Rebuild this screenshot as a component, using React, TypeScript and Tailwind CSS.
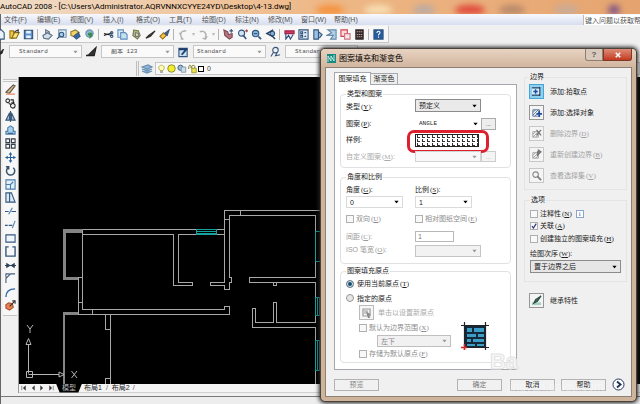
import type { ReactNode } from 'react'

type IconProps = { children: ReactNode; className?: string }

function Icon({ children, className = 'w-3 h-3' }: IconProps) {
  return (
    <svg viewBox="0 0 12 12" fill="none" stroke="#34557d" strokeWidth="1.2" className={`shrink-0 ${className}`}>
      {children}
    </svg>
  )
}

function ToolButton({ label, children }: { label: string; children: ReactNode }) {
  return (
    <button aria-label={label} className="flex w-[14px] h-[14px] shrink-0 items-center justify-center">
      <Icon className="w-[11px] h-[11px]">{children}</Icon>
    </button>
  )
}

function Separator() {
  return <span className="mx-[2px] h-[11px] w-px shrink-0 bg-[#b4b4b4]" />
}

function Key({ k }: { k: string }) {
  return (
    <span className="ml-px font-['Liberation_Serif','Noto_Sans_CJK_SC',serif]">
      (<u>{k}</u>)
    </span>
  )
}

type ComboProps = { label: string; value: string; className: string; disabled?: boolean; mono?: boolean; faint?: boolean }

function Combo({ label, value, className, disabled, mono, faint }: ComboProps) {
  return (
    <div className={`relative shrink-0 ${className}`}>
      <select
        aria-label={label}
        disabled={disabled}
        defaultValue={value}
        className={`block w-full h-full appearance-none bg-transparent pl-[3px] leading-none opacity-100 ${
          mono ? "font-['Liberation_Mono','Noto_Sans_CJK_SC',monospace] text-[6px]" : ''
        } ${disabled ? 'text-[#858585]' : ''}`}
      >
        <option>{value}</option>
      </select>
      <svg viewBox="0 0 6 4" className="pointer-events-none absolute right-[3px] top-1/2 w-[5px] h-[3px] -translate-y-1/2">
        <path d="M0 0h6L3 4z" fill={disabled || faint ? '#999' : '#000'} />
      </svg>
    </div>
  )
}

function Check({ label, k, checked, disabled }: { label: string; k: string; checked?: boolean; disabled?: boolean }) {
  return (
    <label className={`flex items-center gap-[2px] whitespace-nowrap ${disabled ? 'text-[#8c8c8c]' : ''}`}>
      <span className="relative flex w-2 h-2 shrink-0">
        <input
          type="checkbox"
          defaultChecked={checked}
          disabled={disabled}
          className="peer w-2 h-2 appearance-none border border-[#b0b0b0] bg-[#f8f8f8]"
        />
        <svg viewBox="0 0 8 8" className="pointer-events-none absolute inset-0 hidden peer-checked:block" fill="none" stroke="#3b3f86" strokeWidth="1.3">
          <path d="M2 4l1.4 2L6.2 1.6" />
        </svg>
      </span>
      <span>
        {label}
        <Key k={k} />
      </span>
    </label>
  )
}

function Group({ title, className, children }: { title: string; className: string; children: ReactNode }) {
  return (
    <fieldset className={`min-w-0 border border-[#dfe1e4] rounded-sm pl-[5px] ${className}`}>
      <legend className="px-px leading-[10px]">{title}</legend>
      {children}
    </fieldset>
  )
}

const menus = ['文件(F)', '编辑(E)', '视图(V)', '插入(I)', '格式(O)', '工具(T)', '绘图(D)', '标注(N)', '修改(M)', '窗口(W)', '帮助(H)']

function StandardToolbar() {
  return (
    <div className="flex h-[19px] items-center">
      <div className="flex h-[17px] items-center border-r border-b border-[#c8c8c8] bg-[#f7f7f7] pr-[3px]">
        <div className="-ml-[8px] flex">
          <ToolButton label="新建"><path d="M3 1h4l3 3v7H3z" fill="#e8f3fb" /></ToolButton>
          <ToolButton label="打开"><path d="M1 2h4v8H1z" fill="#f2c648" stroke="#a17818" /><path d="M3 10l3-6h5l-3 6z" fill="#ffe37c" stroke="#83701d" /><path d="M6 3l4-2v3" stroke="#333" /></ToolButton>
          <ToolButton label="保存"><path d="M1.5 1.5h9v9h-9z" fill="#5c92cc" /><path d="M3.5 2h5v3h-5zM3.5 7h5v3h-5z" fill="#e6f1fa" stroke="none" /></ToolButton>
        </div>
        <Separator />
        <div className="flex">
          <ToolButton label="打印"><path d="M1 7l5-3 5 3-4 4-5-1zM4 5V1l4 2v2" fill="#d5dfe8" stroke="#5b6f84" /></ToolButton>
          <ToolButton label="打印预览"><path d="M3 1h8v8H3z" fill="#e8f0f6" stroke="#6d92b5" /><circle cx="6" cy="6" r="2.5" fill="#a7cce9" /><path d="M4 8l-3 3" /></ToolButton>
          <ToolButton label="发布"><path d="M1 3l5-2 4 3-4 5-5-2z" fill="#f3d35b" stroke="#8a7a35" /><path d="M4 8l5-4 2 4-4 3z" fill="#3969a8" /></ToolButton>
          <ToolButton label="三维"><circle cx="6" cy="5" r="4" fill="#8fb6cf" stroke="#6d93ac" /><path d="M5 4h4v4l-3 3V8l-2-2z" fill="#3c8a4d" stroke="none" /></ToolButton>
        </div>
        <Separator />
        <div className="flex">
          <ToolButton label="剪切"><path d="M1 5l9 2M1 7l9-3" stroke="#222" /><circle cx="9.500" cy="4" r="1.300" /><circle cx="9.500" cy="8" r="1.300" /></ToolButton>
          <ToolButton label="复制"><path d="M1 1h6v8H1z" fill="#dcecf7" stroke="#5f8fbd" /><path d="M4 4h5l2 2v5H4z" fill="#c3dff3" stroke="#5f8fbd" /></ToolButton>
          <ToolButton label="粘贴"><path d="M3 1l5 1 2 5-3 4-5-4z" fill="#b1b47a" stroke="#777c4c" /><path d="M5 4l3 1v3H5z" fill="#eee" stroke="#777" /></ToolButton>
          <ToolButton label="特性匹配"><path d="M1 10l3-3 7-5-5 6z" fill="#3b3326" stroke="#32302c" /></ToolButton>
          <ToolButton label="块编辑器"><path d="M1 8l4-4 3 3-4 4z" fill="#f5c443" stroke="#977115" /><path d="M6 5l5-4-2 6z" fill="#54617d" /></ToolButton>
        </div>
        <Separator />
        <div className="flex">
          <ToolButton label="放弃"><path d="M9 2C3 2 1 6 5 11M1 5l3 0M3 11l3 0" stroke="#b3b3b3" strokeWidth="1.600" /></ToolButton>
          <span className="w-[6px] self-center text-center text-[6px] leading-none text-[#bbb]">▾</span>
          <ToolButton label="重做"><path d="M2 3c5-2 8 2 6 7M5 10l3 1 2-3" stroke="#b3b3b3" strokeWidth="1.600" /></ToolButton>
          <span className="w-[6px] self-center text-center text-[6px] leading-none text-[#bbb]">▾</span>
        </div>
        <Separator />
        <div className="flex">
          <ToolButton label="平移"><path d="M1 1l4 2 1 3 4-1v4l-3 2-5-4z" fill="#b9757b" stroke="#7b4858" /><path d="M7 2h4M9 0v4" stroke="#3a4f7e" /></ToolButton>
          <ToolButton label="实时缩放"><circle cx="5" cy="4.500" r="3.300" fill="#cfe4f3" /><path d="M7 7l3 4" strokeWidth="1.700" /><path d="M9 2h3M10.500 .5v3" stroke="#a64643" /></ToolButton>
          <ToolButton label="窗口缩放"><circle cx="5" cy="5" r="3.500" fill="#89b5de" /><path d="M8 8l3 3" strokeWidth="1.700" /><path d="M3 5h4" /></ToolButton>
          <ToolButton label="缩放上一个"><circle cx="8" cy="5" r="2.500" fill="#88afd7" /><path d="M8 8l3 3M9 1L2 5l6 3" stroke="#263b62" strokeWidth="1.500" /></ToolButton>
        </div>
        <Separator />
        <div className="flex">
          <ToolButton label="特性"><path d="M1 2h10v3H1z" fill="#cc3867" stroke="#a52548" /><path d="M2 5v6l3-4 2 4 3-5" stroke="#284b79" /></ToolButton>
          <ToolButton label="设计中心"><path d="M1 1h10v10H1z" fill="#e1ebf4" /><path d="M3 3h2v2H3zM3 7h2v2H3zM7 4h2M7 8h2" /></ToolButton>
          <ToolButton label="工具选项板"><path d="M2 1h5v10H2zM7 3l4 3-3 4" fill="#9dc3e4" /></ToolButton>
          <ToolButton label="图纸集"><path d="M2 1h9v10H5l3-4H1l5-3z" fill="#b4d0e6" stroke="#6588a8" /></ToolButton>
          <ToolButton label="标记集"><path d="M1 1h7v7H1z" fill="#ffd9d9" stroke="#cf4050" /><path d="M5 5h6v6H5z" fill="#f5e4e6" stroke="#cf7680" /></ToolButton>
          <ToolButton label="计算器"><path d="M2 1h8v10H2z" fill="#302b2b" stroke="#302b2b" /><path d="M3 3h6M3 6h6M3 8.500h6" stroke="#cb9c90" strokeDasharray="1.500 .7" /></ToolButton>
        </div>
        <Separator />
        <ToolButton label="帮助">
          <path d="M1 1h10v10H1z" fill="#235e9f" />
          <path d="M4.300 4.300c0-2.600 4-2.200 3.200 0C7.200 5.200 6 5.400 6 7M6 8.300v1.200" stroke="#fff" />
        </ToolButton>
      </div>
    </div>
  )
}

const styleBox = 'w-[73px] h-[13px] border border-[#c6c6c6] bg-[#fafafa] text-[#555] pl-[6px]'

function StyleToolbar() {
  return (
    <div className="flex h-4 items-center gap-1 pb-px">
      <Icon className="-ml-[5px] w-[9px] h-3"><path d="M2 10l8-8-2 6z" fill="#222" stroke="#222" /></Icon>
      <Combo label="文字样式" value="Standard" mono faint className={styleBox} />
      <Icon className="w-[11px] h-3"><path d="M0 10h9l2-9-8 8z" fill="#333" stroke="#222" /></Icon>
      <Combo label="标注样式" value="副本 123" mono faint className={styleBox} />
      <Icon className="w-[11px] h-3"><path d="M1 2h9v9H1z" fill="#cadff2" /><path d="M1 3h9M4 9l6-7" stroke="#1d3e6c" strokeWidth="2" /></Icon>
      <Combo label="表格样式" value="Standard" mono faint className="w-[73px] h-[13px] border border-[#c6c6c6] bg-[#fafafa] text-[#555]" />
      <Icon className="w-[11px] h-3"><circle cx="6" cy="4" r="3" /><path d="M4 6L1 11M8 6l-2 4 5-1" /></Icon>
      <Combo label="多重引线样式" value="Standard" mono faint className={styleBox} />
    </div>
  )
}

function LayerToolbar() {
  return (
    <div className="flex h-[17px] items-center pl-[135px]">
      <span className="h-[15px] w-[3px] border-x border-[#bdbdbd]" />
      <Icon className="mx-[2px] w-3 h-3"><path d="M1 4l6-2 4 2-5 2zM1 6l5 2 5-2M1 8l5 2 5-2" fill="#91b7d6" stroke="#6b90b3" /></Icon>
      <div className="flex h-[13px] flex-1 items-center gap-px border border-[#c6c6c6] bg-[#f8f8f8] pl-px text-[7px] text-[#444]">
        <Icon className="w-[9px] h-3"><path d="M4 8C0 3 4 1 6 1s6 2 2 7z" fill="#fffbb2" stroke="#b3a84b" /><path d="M4 10h4" stroke="#555" /></Icon>
        <Icon className="w-[9px] h-[9px]"><circle cx="6" cy="6" r="5" fill="#f1ed2e" stroke="#85822a" /></Icon>
        <Icon className="w-[10px] h-[9px]"><circle cx="4" cy="5" r="3.500" fill="#a1bfd4" /><path d="M5 4h6v7H5z" fill="#cbdbe7" stroke="#8297a6" /></Icon>
        <Icon className="w-[9px] h-[10px]"><path d="M1 6V3c0-3 4-2 3 0v2M5 5V3c0-3 5-2 4 0v2" stroke="#77721c" /><path d="M5 5h6v6H5z" fill="#ebe447" stroke="#98922c" /></Icon>
        <span className="w-[6px] h-[6px] border border-black bg-white" />
        <span className="pl-[2px]">0</span>
      </div>
    </div>
  )
}

const modifyTools: { label: string; art: ReactNode }[] = [
  { label: '删除', art: <><path d="M1 9l8-8 2 1-6 8z" fill="#d6bb8d" stroke="#615646" /><path d="M1 11h10" stroke="#e2764b" /></> },
  { label: '复制', art: <><circle cx="3" cy="3" r="2" stroke="#333" /><circle cx="8.500" cy="8.500" r="2.500" stroke="#333" /><path d="M6 2h3v3M7 5l2 1 1-2M4 6l3 1" stroke="#222" /></> },
  { label: '镜像', art: <path d="M5 2L1 10h4zM7 2l4 8H7zM6 0v12" fill="#9ebcd7" stroke="#3c5878" /> },
  { label: '偏移', art: <><path d="M1 10h10V7H9V3L6 1 3 3v4H1z" fill="#abd0eb" stroke="#4c80ad" /><path d="M3 9h6" /></> },
  { label: '阵列', art: <path d="M1 1h4v4H1zM7 1h4v4H7zM1 7h4v4H1zM7 7h4v4H7z" stroke="#333d47" /> },
  { label: '移动', art: <><path d="M6 1v10M1 6h10" stroke="#2c639f" /><path d="M6 0l2 3H4zM6 12l2-3H4zM0 6l3-2v4zM12 6L9 4v4z" fill="#2c639f" stroke="none" /></> },
  { label: '旋转', art: <path d="M4 2.500a4.500 4.500 0 1 0 5 .5M1 2h3v3" stroke="#35526f" strokeWidth="1.600" /> },
  { label: '缩放', art: <path d="M1 1h10v10H1zM1 6h5v5M6 6l3-3" fill="#e2f0fa" stroke="#4c7ea9" /> },
  { label: '拉伸', art: <path d="M1 1h4v10H1zM5 1h2l4 10H5" fill="#dce9f4" /> },
  { label: '修剪', art: <><path d="M0 6h4M7 6h5" stroke="#355a81" /><path d="M4 9l4-7" stroke="#4c80ad" /></> },
  { label: '延伸', art: <><path d="M0 7h3M4 7h4" stroke="#355a81" /><path d="M8 10l3-8" stroke="#4c80ad" /></> },
  { label: '打断于点', art: <path d="M1 2h10v8H1z" fill="#eef6fc" /> },
  { label: '打断', art: <path d="M4 1H1v10h10V1H8" strokeWidth="1.500" /> },
  { label: '合并', art: <path d="M0 6h12M2 4l3 2-3 2zM10 4L7 6l3 2z" fill="#234d78" stroke="#2d4056" /> },
  { label: '倒角', art: <path d="M1 11V6l5-5h5M1 5V1h4" stroke="#45627e" /> },
  { label: '圆角', art: <path d="M1 11C1 5 5 2 11 2" stroke="#2f69a8" strokeWidth="1.500" /> },
  { label: '分解', art: <><path d="M1 5l3-2 4 1 1 4-4 3-4-2z" fill="#ec8053" stroke="#a3512d" /><path d="M5 7l6-6M8 1h3v3" stroke="#333" /></> },
]

function ModifyToolbar() {
  return (
    <div className="mt-[2px] ml-[2px] flex w-[14px] h-[237px] shrink-0 flex-col items-center justify-between border-b border-[#c5c5c5] bg-[#f7f7f7] pb-1">
      <span className="h-[3px] w-full border-y border-[#c5c5c5]" />
      {modifyTools.map(({ label, art }) => (
        <button key={label} aria-label={label} className="flex">
          <Icon className="w-[11px] h-[11px]">{art}</Icon>
        </button>
      ))}
    </div>
  )
}

function FloorPlan() {
  return (
    <svg className="w-full h-full" fill="none" strokeWidth="1" shapeRendering="crispEdges" aria-label="平面图">
      <g transform="translate(-18 -77)">
        {/* bay windows */}
        <g fill="#858585">
          <path d="M62 229h20v4H65v44h12v3H62z" />
          <path d="M62 312h15v3H64v69h-2z" />
        </g>
        {/* walls */}
        <g stroke="#a8a8a8">
          <path d="M81.500 229.500H223.500V210.500H319.500" />
          <path d="M81.500 229.500V309.500H223.500V306.500H228.500V314.500H77.500V277.500H81.500" />
          <path d="M81.500 234.500H172.500V285.500H191.500V282.500H177.500V234.500H223.500V282.500H209.500V285.500H223.500V289.500H228.500V282.500H230.500V277.500H228.500V215.500H314.500V277.500H248.500V282.500H314.500V322.500H275.500V302.500H272.500V322.500H254.500V308.500H251.500V327.500H314.500V384" />
          <path d="M239.500 210v5M223 219.500h5M272.500 282.500v3h3v-3M77 302.500h4M91.500 310v4" />
          <path d="M104.500 314.500V329.500H109.500M109.500 314V384M104.500 384V378.500H109.500M223.500 229v6" />
        </g>
        {/* window openings */}
        <g stroke="#16a3a0">
          <path d="M195.500 229.500h20v5h-20zM195 231.500h20M195 233.500h20" />
          <path d="M322 231.500H314.500V261.500H322" />
          <path d="M314.500 297.500h5v18h-5zM316.500 297v18M318.500 297v18" />
          <path d="M314.500 340.500h5v30h-5zM316.500 340v30M318.500 340v30" />
        </g>
        {/* coordinate axes */}
        <g stroke="#b5b5b5" shapeRendering="auto">
          <path d="M25.500 371.500h6v6h-6zM27.500 373.500V345M25 344.500l2.500-6 2.500 6zM27.500 374.500H58M58 372l5 2.500-5 2.500z" />
          <path d="M26 325l3 4 3-4M29 329v4M70.500 371l5.500 7M76 371l-5.500 7" />
        </g>
      </g>
    </svg>
  )
}

function LayoutTabs() {
  return (
    <div className="flex h-[9px] items-center border-b border-[#d0d0d0] bg-[#f4f4f4] text-[7px] leading-[8px]">
      <div className="flex w-[37px] justify-around">
        {['M1 1v6M6 1L3 4l3 3z', 'M6 1L3 4l3 3z', 'M2 1l3 3-3 3z', 'M2 1l3 3-3 3zM7 1v6'].map((d) => (
          <button key={d} aria-label="滚动布局">
            <svg viewBox="0 0 8 8" className="w-[6px] h-[6px]" fill="#333" stroke="#555" strokeWidth=".8"><path d={d} /></svg>
          </button>
        ))}
      </div>
      <button className="h-[9px] w-[26px] bg-black text-[#bbb] [clip-path:polygon(0_0,100%_0,86%_100%,14%_100%)]">模型</button>
      <button className="ml-[2px] whitespace-nowrap">布局1</button>
      <span className="mx-1 text-[#555]">/</span>
      <button className="whitespace-nowrap">布局2</button>
      <span className="mx-[3px] text-[#555]">/</span>
    </div>
  )
}

function BoundaryButton({ label, k, art, disabled, active }: { label: string; k?: string; art: ReactNode; disabled?: boolean; active?: boolean }) {
  return (
    <label className={`flex h-[15px] items-center gap-[6px] whitespace-nowrap ${disabled ? 'text-[#a3a3a3]' : ''}`}>
      <button
        disabled={disabled}
        aria-label={label}
        className={`flex w-[15px] h-[15px] items-center justify-center border ${
          active ? 'border-[#43a6d5] bg-[#8fd0f0]' : disabled ? 'border-[#c8c8c8] bg-[#f4f4f4]' : 'border-[#969696] bg-[#f4f4f4]'
        }`}
      >
        <Icon className="w-[11px] h-[11px]">{art}</Icon>
      </button>
      <span>
        {label}
        {k && <Key k={k} />}
      </span>
    </label>
  )
}

function HatchSettings() {
  return (
    <div className="w-[183px] shrink-0">
      <div className="flex h-3 items-end">
        <button className="z-10 -mb-px h-[13px] w-[37px] border border-b-0 border-[#a5a8ae] bg-white leading-[12px]">图案填充</button>
        <button className="h-[11px] w-[27px] border border-l-0 border-b-0 border-[#a5a8ae] bg-[#eee] leading-[10px]">渐变色</button>
      </div>
      <div className="h-[286px] border border-[#a5a8ae] bg-white pt-1 px-[5px]">
        <Group title="类型和图案" className="h-[79px]">
          <div className="grid grid-cols-[69px_1fr] items-center">
            <span className="h-[17px] leading-[15px]">类型<Key k="Y" />:</span>
            <Combo label="类型" value="预定义" className="mb-1 h-[13px] w-[66px] border border-[#8b8b8b] bg-[#eaeaea]" />
            <span className="h-4 leading-4">图案<Key k="P" />:</span>
            <div className="flex items-center">
              <Combo label="图案" value="ANGLE" mono className="h-3 w-[66px] pl-px" />
              <button className="h-3 w-[15px] border border-[#aaa] bg-[#eee] text-[6px] leading-[6px]">...</button>
            </div>
            <span className="h-4 leading-4">样例:</span>
            <div className="relative flex">
              <button aria-label="样例" className="h-[13px] w-[64px] border border-[#222] bg-white">
                <svg className="block w-full h-full" shapeRendering="crispEdges">
                  <defs>
                    <pattern id="angle" width="5" height="4" patternUnits="userSpaceOnUse">
                      <path d="M1.500 0v2.500H4" fill="none" stroke="#333" />
                    </pattern>
                  </defs>
                  <rect width="100%" height="100%" fill="url(#angle)" />
                </svg>
              </button>
              <span className="pointer-events-none absolute -left-2 -top-[4px] h-[23px] w-[82px] rounded-[7px] border-[3px] border-[#dc202d]" />
            </div>
            <span className="h-[17px] leading-[17px] text-[#aaa]">自定义图案<Key k="M" />:</span>
            <div className="flex items-center">
              <Combo label="自定义图案" value="" disabled className="h-[11px] w-[66px] border border-[#d4d4d4] bg-[#f8f8f8]" />
              <button disabled className="h-[11px] w-[15px] border border-[#ccc] bg-[#f4f4f4] text-[6px] leading-[6px] text-[#aaa]">...</button>
            </div>
          </div>
        </Group>
        <Group title="角度和比例" className="mt-1 h-[92px]">
          <div className="grid grid-cols-[69px_1fr] items-center">
            <span className="h-[14px] leading-[15px]">角度<Key k="G" />:</span>
            <span className="h-[14px] leading-[15px]">比例<Key k="S" />:</span>
            <Combo label="角度" value="0" className="h-3 w-[57px] border border-[#dadada]" />
            <Combo label="比例" value="1" className="h-3 w-[57px] border border-[#dadada]" />
            <div className="py-[6px]"><Check label="双向" k="U" disabled /></div>
            <div className="py-[6px]"><Check label="相对图纸空间" k="E" disabled /></div>
            <label htmlFor="spacing" className="text-[#9a9a9a]">间距<Key k="C" />:</label>
            <input id="spacing" disabled defaultValue="1" className="my-px h-[11px] w-[39px] border border-[#b8b8b8] pl-[2px] text-[#777]" />
            <span className="text-[#9a9a9a]">ISO 笔宽<Key k="O" />:</span>
            <Combo label="ISO 笔宽" value="" disabled className="mt-[2px] h-3 w-[66px] border border-[#c4c4c4] bg-[#f2f2f2]" />
          </div>
        </Group>
        <Group title="图案填充原点" className="mt-[2px] h-[97px]">
          <label className="flex h-4 items-center gap-[3px]">
            <input type="radio" name="origin" defaultChecked className="w-2 h-2 appearance-none rounded-full border border-[#7c8994] bg-[#dfe9ef] checked:bg-[#174c72] checked:shadow-[inset_0_0_0_1px_#d9e9f2]" />
            <span>使用当前原点<Key k="T" /></span>
          </label>
          <label className="flex h-3 items-center gap-[3px]">
            <input type="radio" name="origin" className="w-2 h-2 appearance-none rounded-full border border-[#999] bg-[#e6e6e6]" />
            <span>指定的原点</span>
          </label>
          <div className="flex pl-[13px]">
            <div className="w-[102px]">
              <div className="flex h-[17px] items-center gap-1 text-[#aaa]">
                <button disabled aria-label="单击以设置新原点" className="flex w-[15px] h-[15px] items-center justify-center border border-[#bbb] bg-[#f6f6f6]">
                  <Icon><path d="M2 2h7v7H2zM3 4h4M3 6h3" stroke="#999" /><path d="M5 4l5 4-2 0 1 3-2 0-1-3z" fill="#888" stroke="none" /></Icon>
                </button>
                单击以设置新原点
              </div>
              <div className="flex h-[13px] items-center"><Check label="默认为边界范围" k="X" disabled /></div>
              <Combo label="原点位置" value="左下" disabled className="my-px ml-[18px] h-3 w-[74px] border border-[#bfbfbf] bg-[#f1f1f1]" />
              <div className="flex h-3 items-center"><Check label="存储为默认原点" k="F" disabled /></div>
            </div>
            <svg viewBox="0 0 28 30" className="mt-[18px] w-7 h-[30px]">
              <path d="M4 4h21v21H4z" fill="#14293a" />
              <path d="M6 6h5v4H6zM13 6h10v4H13zM6 12h9v3H6zM17 12h6v3h-6zM6 17h4v3H6zM12 17h11v3H12zM6 22h8v2H6zM16 22h7v2h-7z" fill="#3c9dc6" />
              <path d="M0 3.500h28M3.500 0v28M24.500 0v28M0 25.500h28" stroke="#222" strokeWidth="1.200" />
              <path d="M0 25.500h6M3.500 22v6" stroke="#df2525" strokeWidth="1.500" />
            </svg>
          </div>
        </Group>
      </div>
    </div>
  )
}

const hatch = <path d="M2 10V3h7v7zM2 6l3-3M2 9l6-6M4 10l5-5" strokeWidth=".8" />
const hatchOff = <path d="M2 10V4h6v6zM2 7l3-3M2 10l6-6M5 10l3-3" stroke="#999" strokeWidth=".9" />

function BoundaryPanel() {
  return (
    <div className="min-w-0 flex-1 pl-[7px] pr-1">
      <fieldset className="h-[118px] min-w-0 border border-[#e4e4e4] pl-1 pt-[2px]">
        <legend className="px-px leading-[10px]">边界</legend>
        <div className="flex flex-col gap-[6px]">
          <BoundaryButton active label="添加:拾取点" art={<><path d="M1 2h8M1 10h8M9.500 1v10" stroke="#27405c" strokeWidth="1.500" /><path d="M1 3h8v6H1z" fill="#d8edfa" stroke="none" /><path d="M5 3.500v5M2.500 6h5" stroke="#1c4ea0" strokeWidth="1.600" /></>} />
          <BoundaryButton label="添加:选择对象" art={<>{hatch}<path d="M9 4v7M6 7.500h6" stroke="#1c4ea0" strokeWidth="1.800" /></>} />
          <BoundaryButton disabled label="删除边界" k="D" art={<>{hatchOff}<path d="M6 2l5 6M11 2L6 8" stroke="#777" strokeWidth="1.500" /></>} />
          <BoundaryButton disabled label="重新创建边界" k="B" art={<>{hatchOff}<path d="M7 8V3h3M8 1l3 2-3 3z" fill="#777" stroke="#777" /></>} />
          <BoundaryButton disabled label="查看选择集" k="V" art={<><circle cx="5" cy="5" r="3" stroke="#888" /><path d="M7 7l4 4" stroke="#777" strokeWidth="1.800" /></>} />
        </div>
      </fieldset>
      <fieldset className="mt-[5px] h-[87px] min-w-0 border border-[#e4e4e4] pl-[5px]">
        <legend className="px-px leading-[10px]">选项</legend>
        <div className="mt-[2px] flex h-[13px] items-center gap-1">
          <Check label="注释性" k="N" />
          <span className="h-2 w-2 border border-[#89a4d0] bg-white text-center font-['Liberation_Serif',serif] leading-[6px] text-[#3360b0]">i</span>
        </div>
        <div className="flex h-3 items-center"><Check label="关联" k="A" checked /></div>
        <div className="flex h-[13px] items-center"><Check label="创建独立的图案填充" k="H" /></div>
        <div className="mt-[3px] leading-[12px]">绘图次序<Key k="W" />:</div>
        <Combo label="绘图次序" value="置于边界之后" className="h-[13px] w-[91px] border border-[#8b8b8b] bg-[#e6e6e6]" />
      </fieldset>
      <div className="mt-[11px] pl-[5px]">
        <BoundaryButton label="继承特性" art={<><path d="M1 8h10v3H1z" fill="#a9cfc3" stroke="none" /><path d="M3 9l2-4 6-4-4 6z" fill="#3c6a5c" stroke="#2d4d45" /></>} />
      </div>
    </div>
  )
}

const footerButton = 'h-3 w-[45px] border border-[#b3b3b3] bg-[#f1f1f1] leading-[10px]'

function HatchDialog() {
  return (
    <section
      role="dialog"
      aria-label="图案填充和渐变色"
      className="absolute left-1/2 right-[3px] top-12 flex flex-col rounded-[5px] border border-[#4a423c] bg-[#cfb49c] px-1 pb-1 text-[7px] text-[#222] shadow-[0_0_4px_1px_#222]"
    >
      <header className="-mx-1 flex h-[18px] items-center rounded-t-[4px] bg-linear-to-b from-[#e7d2c1] to-[#d2b69f] pl-[6px] pr-1">
        <svg viewBox="0 0 9 9" className="w-[9px] h-[9px]">
          <path d="M0 0h9v9H0z" fill="#168a80" />
          <path d="M1 8V2l3 5V2l3 5V1" stroke="#ccefea" fill="none" strokeWidth=".9" />
        </svg>
        <h1 className="ml-[3px] text-[8px] text-black">图案填充和渐变色</h1>
        <div className="mb-auto ml-auto flex h-3 text-[8px] font-bold leading-[10px]">
          <button aria-label="帮助" className="w-[18px] rounded-bl-[3px] border border-t-0 border-[#8f7e72] bg-[#d9c9bd] text-[#555]">?</button>
          <button aria-label="关闭" className="flex w-[29px] items-center justify-center rounded-br-[3px] border border-t-0 border-[#7d382a] bg-linear-to-b from-[#dd8b76] to-[#c2361b]">
            <svg viewBox="0 0 8 8" className="w-[6px] h-[6px]" stroke="#fff" strokeWidth="2"><path d="M1 1l6 6M7 1L1 7" /></svg>
          </button>
        </div>
      </header>
      <div className="relative border border-[#8e7f74] bg-[#f0f0f0] pb-[5px] pl-2 pt-1">
        <div className="flex">
          <HatchSettings />
          <BoundaryPanel />
        </div>
        <footer className="mt-2 flex h-[13px] items-center pr-[6px]">
          <button className={`${footerButton} text-[#858585]`}>预览</button>
          <button className={`${footerButton} ml-auto text-[#777]`}>确定</button>
          <button className={`${footerButton} ml-2`}>取消</button>
          <button className={`${footerButton} ml-[6px]`}>帮助</button>
          <button aria-label="更多选项" className="ml-[6px]">
            <svg viewBox="0 0 13 13" className="w-[13px] h-[13px]" fill="#fff" stroke="#25355e"><circle cx="6.500" cy="6.500" r="5.500" /><path d="M5 3.500l3.500 3L5 9.500" fill="none" strokeWidth="2" /></svg>
          </button>
        </footer>
        <span className="pointer-events-none absolute bottom-[22px] right-[113px] text-[22px] font-bold leading-6 text-[#f8f8f8] [-webkit-text-stroke:1px_#e2e2e2]">Ba</span>
        <span className="pointer-events-none absolute bottom-[3px] right-[27px] text-[12px] leading-3 text-white/40">jingyan.baidu.com</span>
      </div>
    </section>
  )
}

// desktop icons showing through the glass title bar
const glassSpots = [
  { cx: 330, rx: 14, fill: '#f5913c' },
  { cx: 378, rx: 14, fill: '#f7e0b4' },
  { cx: 424, rx: 11, fill: '#b9aba3' },
  { cx: 470, rx: 15, fill: '#e0463a' },
  { cx: 512, rx: 13, fill: '#b8886a' },
  { cx: 566, rx: 12, fill: '#c9ab98' },
  { cx: 614, rx: 6, fill: '#7a5086' },
]

export default function App() {
  return (
    <main className="relative flex h-screen flex-col overflow-hidden bg-[#f0f0f0] font-['Liberation_Sans','Noto_Sans_CJK_SC',sans-serif] text-[7px] leading-[9px] text-[#222]">
      <header className="relative h-[14px] shrink-0 overflow-hidden bg-linear-to-r from-[#f0dcc6] via-[#eeb887] to-[#e5a46f]">
        <svg className="absolute inset-0 w-full h-full blur-[3px]" aria-hidden="true">
          {glassSpots.map((s) => (
            <ellipse key={s.cx} cx={s.cx} cy="10" rx={s.rx} ry="5" fill={s.fill} />
          ))}
        </svg>
        <h1 className="relative whitespace-nowrap font-['Roboto',sans-serif] text-[8px] leading-[14px] text-black">
          AutoCAD 2008 - [C:\Users\Administrator.AQRVNNXCYYE24YD\Desktop\4-13.dwg]
        </h1>
      </header>
      <div className="flex min-h-0 flex-1 flex-col border-l border-[#666]">
        <nav className="flex h-[11px] shrink-0 items-center bg-linear-to-b from-[#f8f9fd] to-[#d7deef] pl-[3px]">
          {menus.map((menu) => (
            <button key={menu} className="w-[33px] shrink-0 whitespace-nowrap text-left text-[#555]">{menu}</button>
          ))}
          <input aria-label="帮助搜索" defaultValue="键入问题以获取帮助" className="ml-auto h-[10px] w-[57px] border-l border-[#bbb] bg-white pl-px text-[#555]" />
        </nav>
        <StandardToolbar />
        <StyleToolbar />
        <LayerToolbar />
        <div className="flex min-h-0 flex-1">
          <div className="w-[17px] shrink-0"><ModifyToolbar /></div>
          <div className="flex min-w-0 flex-1 flex-col border-l border-[#999]">
            <div className="min-h-0 flex-1 bg-black"><FloorPlan /></div>
            <LayoutTabs />
          </div>
        </div>
        <footer className="mt-[3px] h-2 shrink-0 border-t border-[#777] bg-[#ededed]" />
      </div>
      <HatchDialog />
    </main>
  )
}
